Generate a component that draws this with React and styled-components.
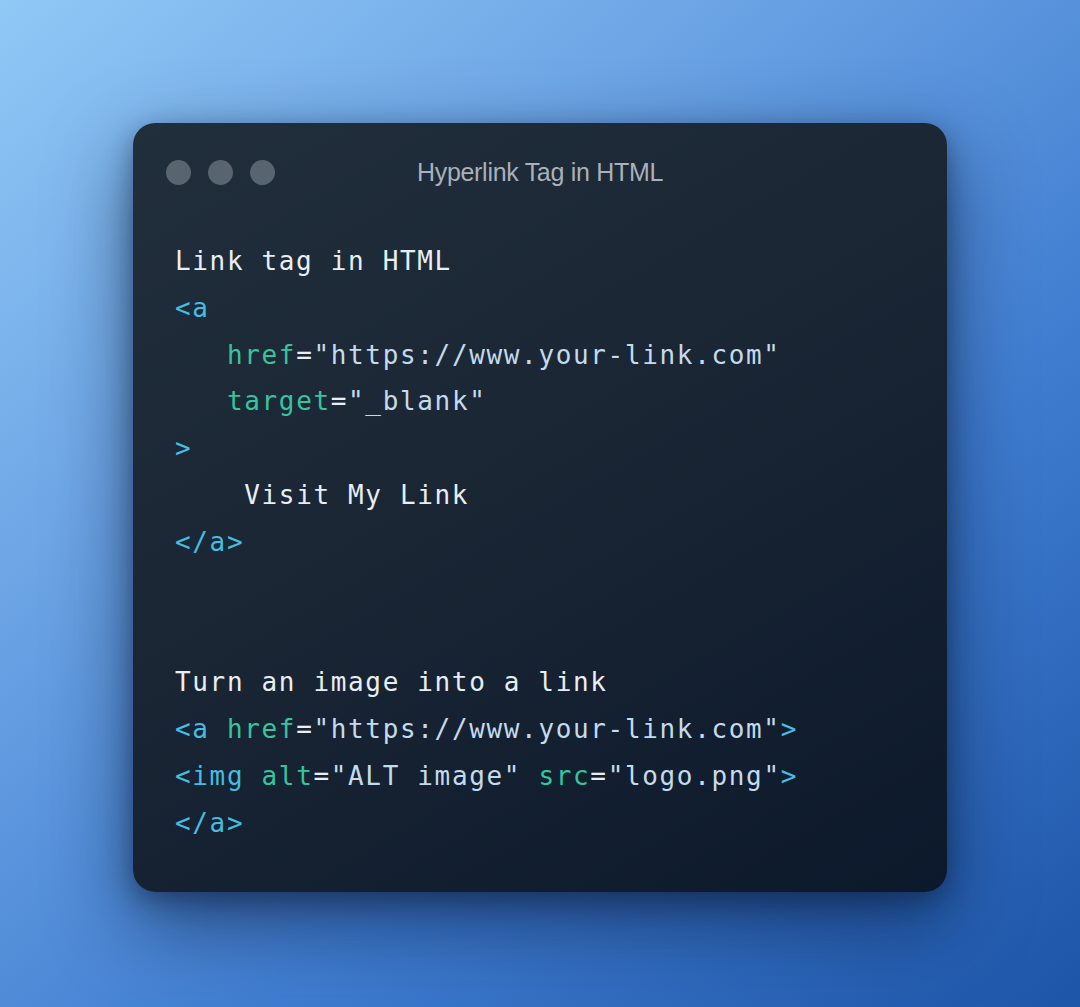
import React from "react"
import styled, { createGlobalStyle } from 'styled-components'

const GlobalStyle = createGlobalStyle`
  html, body {
    margin: 0;
    padding: 0;
  }
  body {
    width: 1080px;
    height: 1007px;
    overflow: hidden;
  }
`

const Backdrop = styled.main`
  width: 1080px;
  height: 1007px;
  display: flex;
  justify-content: center;
  padding-top: 123px;
  box-sizing: border-box;
  background: linear-gradient(140deg, #90c8f6 0%, #6ea6e6 30%, #3f7cd0 65%, #1d55a8 100%);
`

const Window = styled.section`
  width: 814px;
  height: 769px;
  border-radius: 22px;
  background: linear-gradient(150deg, #212e3b 0%, #1a2634 45%, #0c192c 100%);
  box-shadow: 0 30px 80px rgba(10, 25, 55, 0.6), 0 8px 24px rgba(10, 25, 55, 0.4);
  box-sizing: border-box;
  padding: 0 42px;
`

const TitleBar = styled.header`
  height: 98px;
  display: grid;
  grid-template-columns: 120px 1fr 120px;
  align-items: center;
`

const Dots = styled.div`
  display: flex;
  gap: 17px;
  margin-left: -9px;
`

const Dot = styled.span`
  width: 25px;
  height: 25px;
  border-radius: 50%;
  background: #586470;
`

const Title = styled.h1`
  margin: 0;
  text-align: center;
  font-family: "Liberation Sans", Arial, sans-serif;
  font-weight: 400;
  font-size: 25px;
  color: #a9b1ba;
  letter-spacing: -0.3px;
`

const Code = styled.pre`
  margin: 0;
  padding-top: 17px;
  font-family: "DejaVu Sans Mono", monospace;
  font-size: 26px;
  letter-spacing: 1.65px;
  line-height: 46.8px;
  color: #e9eef4;
`

const Line = styled.div`
  height: 46.8px;
  white-space: pre;
`

const Tag = styled.span`
  color: #45bde0;
`

const Attr = styled.span`
  color: #35c59e;
`

const Str = styled.span`
  color: #c3dbec;
`

function App() {
  return (
    <>
      <GlobalStyle />
      <Backdrop>
        <Window>
          <TitleBar>
            <Dots>
              <Dot />
              <Dot />
              <Dot />
            </Dots>
            <Title>Hyperlink Tag in HTML</Title>
          </TitleBar>
          <Code>
            <Line>Link tag in HTML</Line>
            <Line><Tag>&lt;a</Tag></Line>
            <Line>{"   "}<Attr>href</Attr>=<Str>"https://www.your-link.com"</Str></Line>
            <Line>{"   "}<Attr>target</Attr>=<Str>"_blank"</Str></Line>
            <Line><Tag>&gt;</Tag></Line>
            <Line>{"    "}Visit My Link</Line>
            <Line><Tag>&lt;/a&gt;</Tag></Line>
            <Line />
            <Line />
            <Line>Turn an image into a link</Line>
            <Line><Tag>&lt;a</Tag> <Attr>href</Attr>=<Str>"https://www.your-link.com"</Str><Tag>&gt;</Tag></Line>
            <Line><Tag>&lt;img</Tag> <Attr>alt</Attr>=<Str>"ALT image"</Str> <Attr>src</Attr>=<Str>"logo.png"</Str><Tag>&gt;</Tag></Line>
            <Line><Tag>&lt;/a&gt;</Tag></Line>
          </Code>
        </Window>
      </Backdrop>
    </>
  )
}

export default App
